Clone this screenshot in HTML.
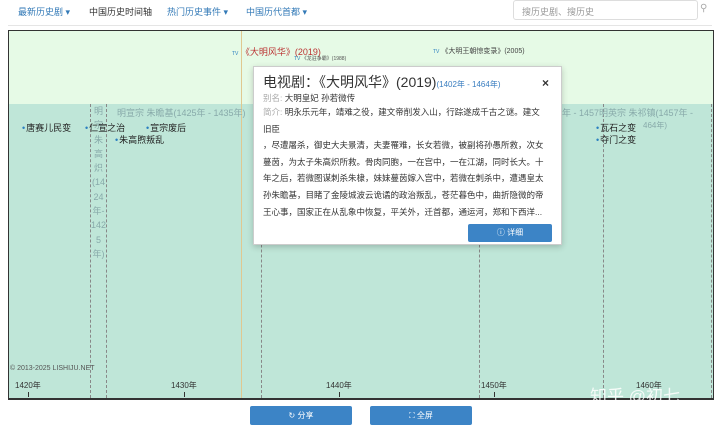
<!DOCTYPE html>
<html><head><meta charset="utf-8"><style>
*{margin:0;padding:0;box-sizing:border-box}
body{width:720px;height:427px;background:#fff;font-family:"Liberation Sans","Noto Sans CJK SC",sans-serif;position:relative;overflow:hidden;color:#333}
.a{position:absolute;white-space:nowrap}
.nav{font-size:9px;top:5px;color:#337ab7}
.dl{position:absolute;top:104px;height:294px;border-left:1px dashed #888}
.ev{font-size:9px;color:#222}
.ev:before{content:"•";color:#2a7fc0;margin-right:1px}
.tk{font-size:8px;color:#333;top:380px}
.tkm{position:absolute;top:392px;width:1px;height:5px;background:#333}
.btn{position:absolute;top:406px;height:19px;background:#3c84c6;color:#fff;font-size:8px;text-align:center;line-height:19px;border-radius:2px}
</style></head><body>
<div class="a nav" style="left:18px">最新历史剧 ▾</div>
<div class="a nav" style="left:89px;color:#333">中国历史时间轴</div>
<div class="a nav" style="left:167px">热门历史事件 ▾</div>
<div class="a nav" style="left:246px">中国历代首都 ▾</div>
<div class="a" style="left:513px;top:0;width:185px;height:20px;border:1px solid #ddd;border-radius:3px;font-size:9px;color:#999;padding:4px 8px">搜历史剧、搜历史</div>
<div class="a" style="left:700px;top:3px;font-size:10px;color:#aaa">⚲</div>
<div class="a" style="left:8px;top:25px;width:704px;height:1px;background:#e5e5e5"></div>
<div class="a" style="left:8px;top:30px;width:706px;height:370px;border:1px solid #333;border-bottom:2px solid #333;background:#bfe6d8"></div>
<div class="a" style="left:9px;top:31px;width:704px;height:73px;background:#e6fae6"></div>
<div class="dl" style="left:90px"></div><div class="dl" style="left:106px"></div>
<div class="a" style="left:241px;top:31px;width:1px;height:367px;background:#e0c890"></div>
<div class="dl" style="left:261px"></div><div class="dl" style="left:479px"></div>
<div class="dl" style="left:603px"></div><div class="dl" style="left:711px"></div>
<div class="a" style="left:232px;top:45px;font-size:9px;color:#b33"><span style="font-size:5px;color:#2a7fc0">TV</span> 《大明风华》(2019)</div>
<div class="a" style="left:294px;top:55px;font-size:5px;color:#555"><span style="color:#2a7fc0">TV</span> 《龙驻争霸》(1988)</div>
<div class="a" style="left:433px;top:46px;font-size:7px;color:#444"><span style="font-size:5px;color:#2a7fc0">TV</span> 《大明王朝惊变录》(2005)</div>
<div class="a" style="left:117px;top:106px;font-size:9px;color:#8aa">明宣宗 朱瞻基(1425年 - 1435年)</div>
<div class="a" style="left:90px;top:104px;width:17px;font-size:9px;color:#8aa;white-space:normal;line-height:14.3px;text-align:center;word-break:break-all">明<br>宗<br>朱<br>高<br>炽<br>(14<br>24<br>年-<br>142<br>5<br>年)</div>
<div class="a" style="left:562px;top:106px;font-size:9px;color:#8aa">年 - 1457明英宗 朱祁镇(1457年 -</div>
<div class="a" style="left:643px;top:120px;font-size:8px;color:#8aa">464年)</div>
<div class="a ev" style="left:22px;top:121px">唐赛儿民变</div>
<div class="a ev" style="left:85px;top:121px">仁宣之治</div>
<div class="a ev" style="left:146px;top:121px">宣宗废后</div>
<div class="a ev" style="left:115px;top:133px">朱高煦叛乱</div>
<div class="a ev" style="left:596px;top:121px">瓦石之变</div>
<div class="a ev" style="left:596px;top:133px">夺门之变</div>
<div class="a" style="left:10px;top:365px;font-size:7px;color:#555">© 2013-2025 LISHIJU.NET</div>
<div class="a tk" style="left:15px">1420年</div><div class="tkm" style="left:28px"></div>
<div class="a tk" style="left:171px">1430年</div><div class="tkm" style="left:184px"></div>
<div class="a tk" style="left:326px">1440年</div><div class="tkm" style="left:339px"></div>
<div class="a tk" style="left:481px">1450年</div><div class="tkm" style="left:494px"></div>
<div class="a tk" style="left:636px">1460年</div>
<div class="a" style="left:590px;top:382px;font-size:17px;color:rgba(255,255,255,.85)">知乎 @初七</div>
<div class="a" style="left:253px;top:66px;width:309px;height:179px;background:#fff;border:1px solid #ccc;box-shadow:0 2px 6px rgba(0,0,0,.2)"></div>
<div class="a" style="left:263px;top:72px;font-size:14px;color:#333">电视剧：《大明风华》(2019)<span style="font-size:8px;color:#3a7ec0">(1402年 - 1464年)</span></div>
<div class="a" style="left:542px;top:76px;font-size:12px;font-weight:bold">×</div>
<div class="a" style="left:263px;top:92px;font-size:8.5px"><span style="color:#aaa">别名: </span>大明皇妃 孙若微传</div>
<div class="a" style="left:263px;top:104px;font-size:8.5px;line-height:16.6px"><span style="color:#aaa">简介: </span>明永乐元年，靖难之役，建文帝削发入山，行踪遂成千古之谜。建文<br>旧臣<br>，尽遭屠杀，御史大夫景清，夫妻罹难，长女若微，被副将孙愚所救，次女<br>蔓茵，为太子朱高炽所救。骨肉同胞，一在宫中，一在江湖，同时长大。十<br>年之后，若微图谋刺杀朱棣，妹妹蔓茵嫁入宫中，若微在刺杀中，遭遇皇太<br>孙朱瞻基，目睹了金陵城波云诡谲的政治叛乱，苍茫暮色中，曲折隐微的帝<br>王心事，国家正在从乱象中恢复，平关外，迁首都，通运河，郑和下西洋...</div>
<div class="a" style="left:468px;top:224px;width:84px;height:18px;background:#3c84c6;border-radius:2px;color:#fff;font-size:8px;text-align:center;line-height:18px">ⓘ 详细</div>
<div class="btn" style="left:250px;width:102px">↻ 分享</div>
<div class="btn" style="left:370px;width:102px">⛶ 全屏</div>
</body></html>
